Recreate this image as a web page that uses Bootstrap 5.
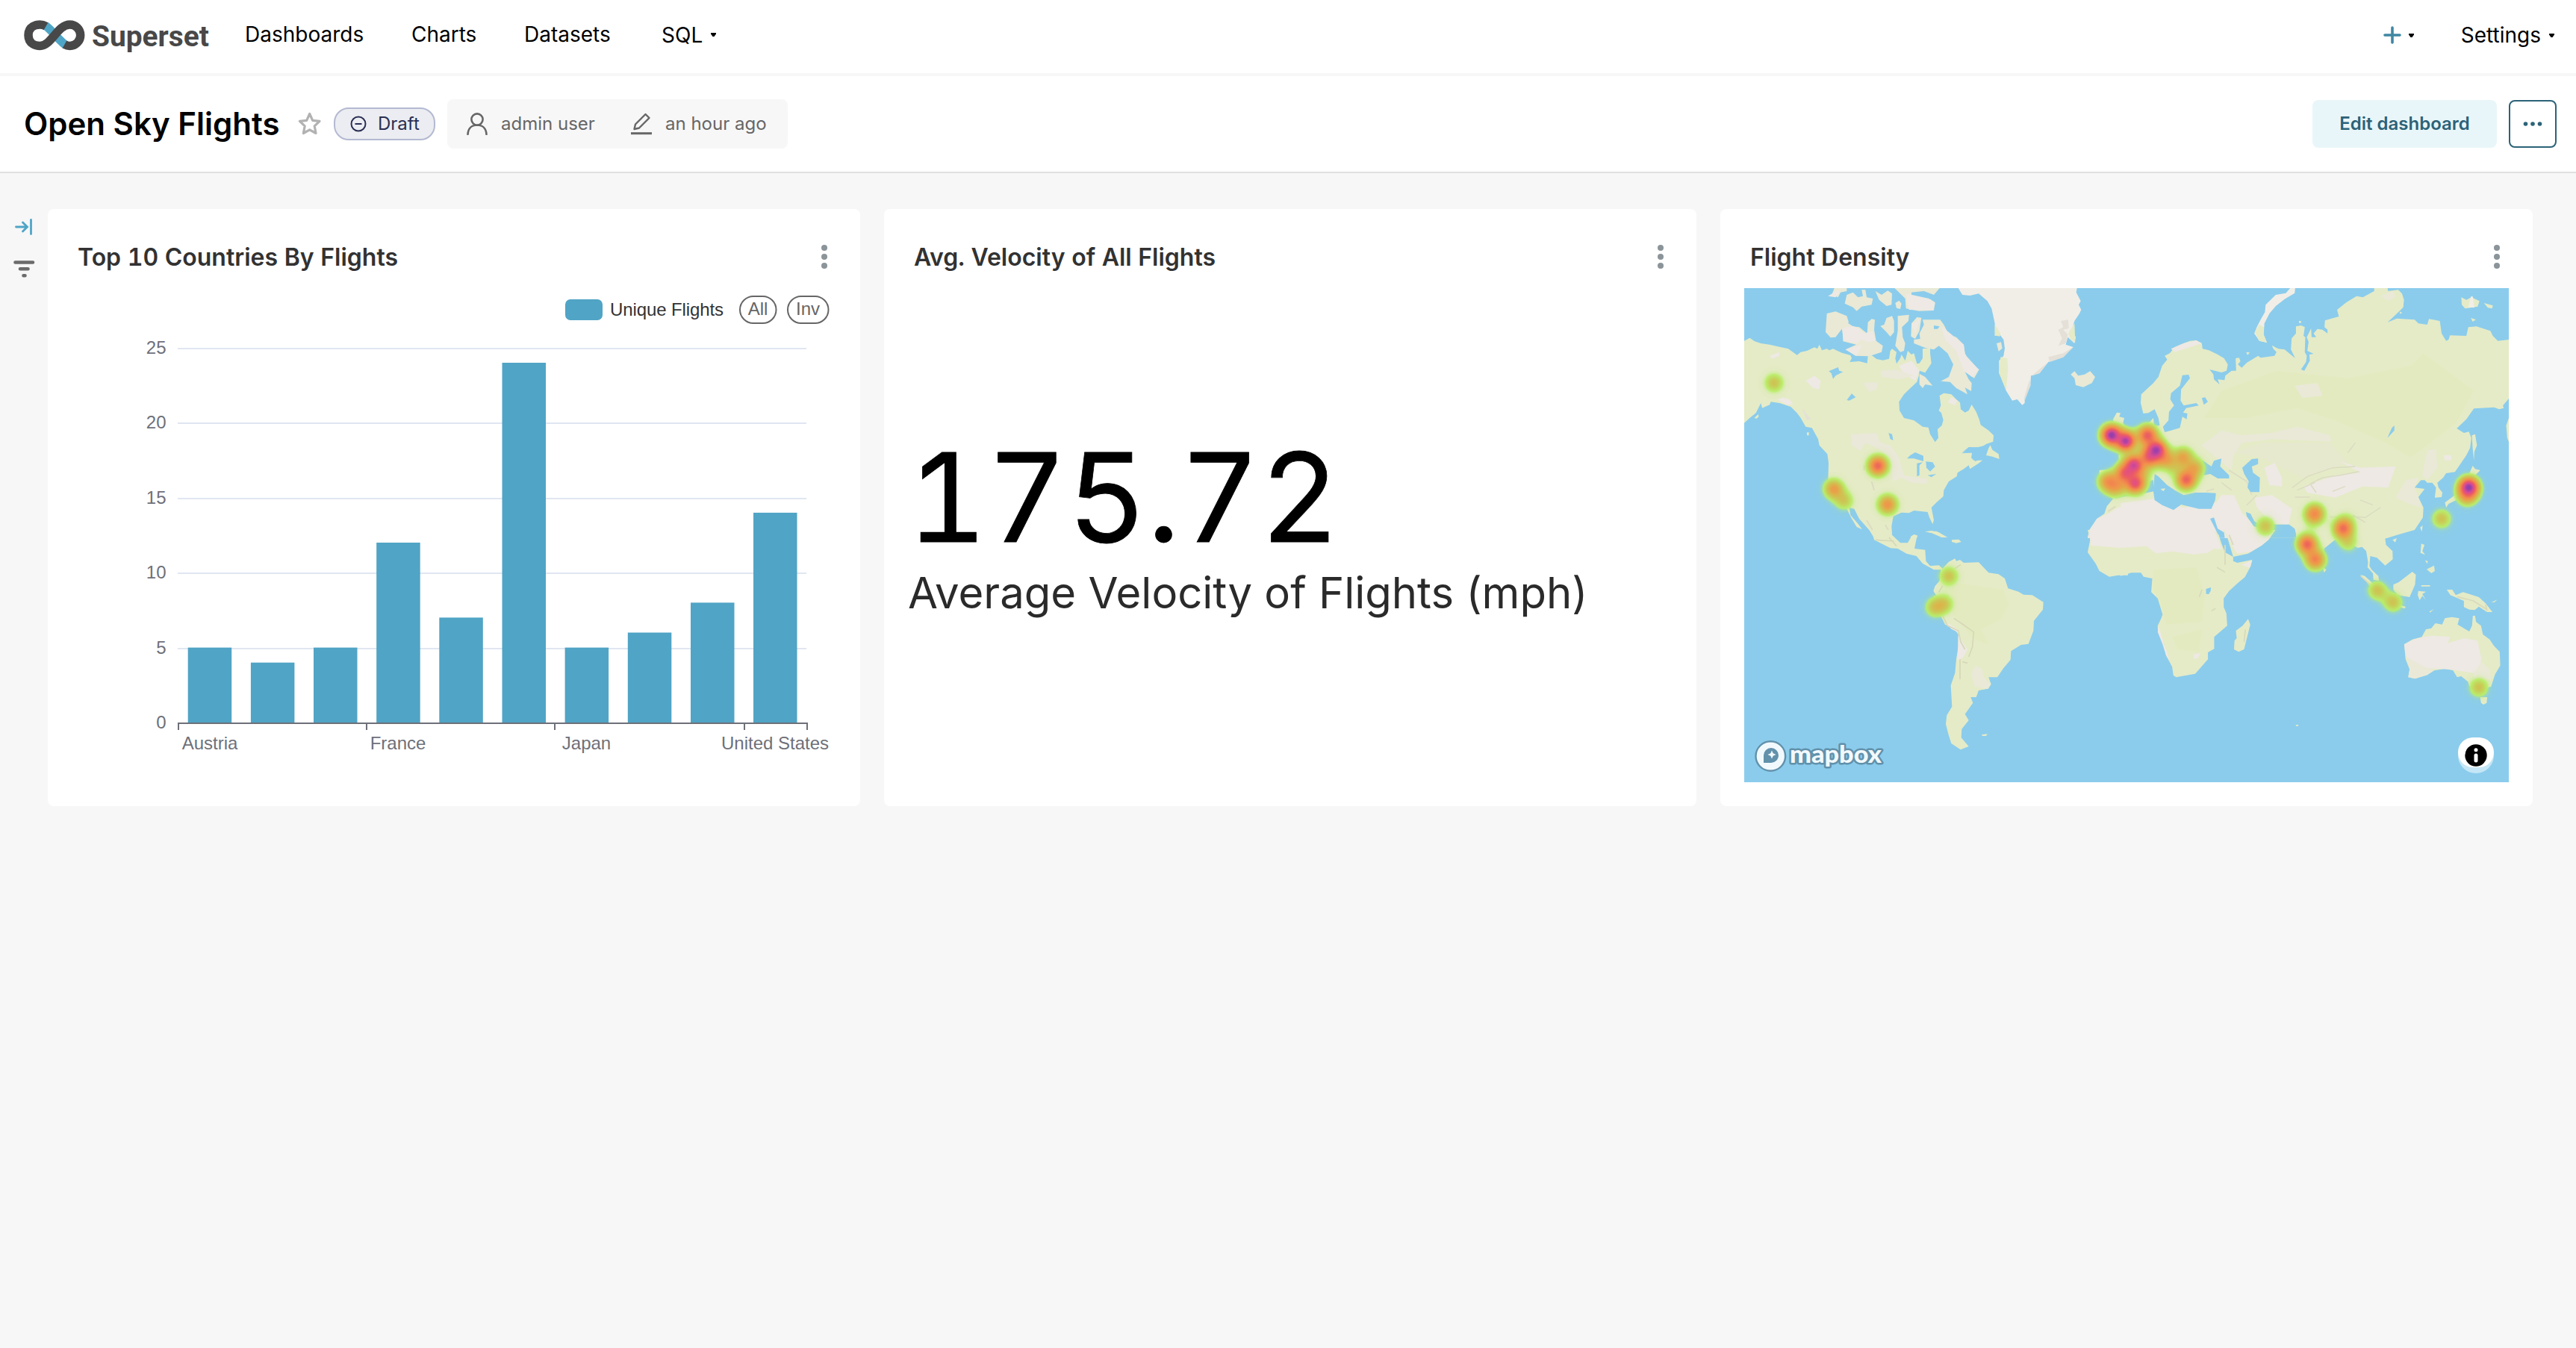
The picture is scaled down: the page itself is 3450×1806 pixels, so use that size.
<!DOCTYPE html>
<html lang="en">
<head>
<meta charset="utf-8">
<title>Open Sky Flights</title>
<link href="https://cdn.jsdelivr.net/npm/bootstrap@5.3.0/dist/css/bootstrap.min.css" rel="stylesheet">
<style>
body{font-family:Inter,"Liberation Sans",sans-serif;background:#f7f7f7;color:#000;font-size:28px;line-height:1;min-height:1806px}
svg{display:block;flex:none}
.topbar{height:102px;border-bottom:4px solid #f7f7f7;padding:0 28px 0 32px;flex-wrap:nowrap}
.topbar .nav-link{color:#000;padding:0 0 6px;line-height:36px}
.logo{margin-top:-5px}
.dash-head{height:130px;border-bottom:2px solid #e0e0e0;padding:0 26px 0 32px}
.dash-title{font-size:42px;font-weight:600;line-height:50px;margin:0;width:342px;white-space:nowrap}
.draft{height:44px;width:136px;border:2px solid #b4b9d2;border-radius:20px;background:#ecedf2;color:#2a2f52;font-size:24px;padding-left:20px;margin-left:14px}
.meta{height:66px;width:456px;background:#f7f7f7;border-radius:8px;color:#666;font-size:24px;margin-left:16px;padding-left:26px}
.btn-edit{width:247px;height:64px;border:0;border-radius:8px;background:#e9f6f9;color:#2c6278;font-weight:600;font-size:24px;padding:0}
.btn-more{width:64px;height:64px;border:2px solid #2b6378;border-radius:8px;background:#fff;padding:0}
.rail{width:64px;padding:10px 0 0 16px}
.board{padding:48px 58px 0 0}
.panel{border:0;border-radius:8px;height:800px;flex:1 1 0;padding:0 32px}
.panel-head{height:106px;padding:24px 10px 0 8px}
.panel-title{font-size:32px;font-weight:600;color:#323232;line-height:40px;margin:0;padding-top:21px;font-feature-settings:"tnum"}
.big-num{font-size:165px;line-height:180px;font-feature-settings:"tnum";margin:190px 0 0 -1px;white-space:nowrap;-webkit-text-stroke:.8px #000}
.big-sub{font-size:58px;line-height:70px;color:#2a2a2a;margin:3px 0 0;white-space:nowrap}
</style>
</head>
<body>
<nav class="navbar topbar bg-white d-flex justify-content-between">
  <div class="d-flex align-items-center">
    <svg class="logo" width="250" height="54" viewBox="32 20 250 54">
      <g fill="none" stroke-width="11.5" stroke="#484848">
        <path d="M61 34.500C69 40 78 53 88 60.500" stroke="#4fa5c6"/>
        <path d="M61.500 35.200C59 33.700 56.500 33 53.500 33C49 33 38 35 38 47.200S49 61.400 53.500 61.400C69 61.400 77 33 93.500 33a14.200 14.200 0 0 1 0 28.400C91.500 61.400 89 60.900 86.500 59.500"/>
      </g>
      <text x="123" y="62" font-family="Roboto" font-weight="700" font-size="39" textLength="157" lengthAdjust="spacingAndGlyphs" fill="#484848">Superset</text>
    </svg>
    <div class="d-flex" style="margin-left:46px">
      <a class="nav-link" style="width:223px">Dashboards</a>
      <a class="nav-link" style="width:151px">Charts</a>
      <a class="nav-link" style="width:184px">Datasets</a>
      <a class="nav-link d-flex align-items-center pb-1">SQL<svg style="margin-left:11px" width="8" height="6"><path d="M0 0H7V1.500L4.500 5H2.500L0 1.500Z"/></svg></a>
    </div>
  </div>
  <div class="d-flex align-items-center pb-1">
    <svg width="24" height="24"><path d="M12 2V22M2 12H22" stroke="#3f87a3" stroke-width="3.600" stroke-linecap="round"/></svg>
    <svg style="margin:2px 62px 0 10px" width="8" height="6"><path d="M0 0H7V1.500L4.500 5H2.500L0 1.500Z"/></svg>
    <span>Settings</span>
    <svg style="margin:2px 0 0 11px" width="8" height="6"><path d="M0 0H7V1.500L4.500 5H2.500L0 1.500Z"/></svg>
  </div>
</nav>
<header class="dash-head bg-white d-flex align-items-center justify-content-between">
  <div class="d-flex align-items-center">
    <h1 class="dash-title">Open Sky Flights</h1>
    <svg style="margin-left:23px" width="36" height="36" viewBox="0 0 36 36"><path d="M17.700 4.500L21.700 13.300L31 14.300L24.200 20.800L26 30.500L17.700 25.800L9.400 30.500L11.200 20.800L4.400 14.300L13.700 13.300Z" fill="none" stroke="#b2b2b2" stroke-width="3.200" stroke-linejoin="round"/></svg>
    <div class="draft d-flex align-items-center">
      <svg width="22" height="22"><circle cx="11" cy="11" r="9.500" fill="none" stroke="#2a2f52" stroke-width="2"/><path d="M6.500 11H15.500" stroke="#2a2f52" stroke-width="2"/></svg>
      <span style="margin-left:15px">Draft</span>
    </div>
    <div class="meta d-flex align-items-center">
      <svg width="28" height="30" viewBox="0 0 28 30"><path d="M1.500 29C2 21 7 16.500 14 16.500S26 21 26.500 29" fill="none" stroke="#666" stroke-width="2.600" stroke-linecap="round"/><circle cx="14" cy="9" r="7.600" fill="#f7f7f7" stroke="#666" stroke-width="2.600"/></svg>
      <span style="margin-left:18px;width:174px">admin user</span>
      <svg width="28" height="30" viewBox="0 0 28 30"><path d="M0 27.700H28" stroke="#666" stroke-width="3"/><path d="M4.500 22L6 15.500L19.500 2L24.500 7L11 20.500Z" fill="none" stroke="#666" stroke-width="2.400" stroke-linejoin="round"/></svg>
      <span style="margin-left:18px">an hour ago</span>
    </div>
  </div>
  <div class="d-flex gap-3">
    <button class="btn btn-edit">Edit dashboard</button>
    <button class="btn btn-more d-flex align-items-center justify-content-center"><svg width="26" height="8" fill="#2b6378"><circle cx="3.500" cy="4" r="2.800"/><circle cx="13" cy="4" r="2.800"/><circle cx="22.500" cy="4" r="2.800"/></svg></button>
  </div>
</header>
<main class="board d-flex">
  <aside class="rail">
    <svg width="32" height="84" viewBox="16 290 32 84"><path d="M21.500 304H36M30.500 298L36.500 304L30.500 310M41.500 294.500V313.500" fill="none" stroke="#4fa5c6" stroke-width="2.800" stroke-linecap="round"/><path d="M20.500 351.500H44M27 360.300H37.500M31.500 369.300H33.500" stroke="#6b6b6b" stroke-width="4.600" stroke-linecap="round"/></svg>
  </aside>
  <div class="d-flex flex-fill" style="gap:32px">
    <section class="card panel">
      <div class="panel-head d-flex justify-content-between align-items-start">
        <h2 class="panel-title">Top 10 Countries By Flights</h2>
        <svg class="mt-4" width="12" height="34" viewBox="0 0 12 34" fill="#8a9499"><circle cx="6" cy="4" r="4"/><circle cx="6" cy="16" r="4"/><circle cx="6" cy="28" r="4"/></svg>
      </div>
      <svg id="chart" width="1024" height="662" viewBox="96 386 1024 662" font-family="'Liberation Sans',Arial,sans-serif" font-size="24">
        <rect x="757" y="401" width="50" height="28" rx="7" fill="#50a4c5"/>
        <text x="817" y="423" fill="#333" textLength="152">Unique Flights</text>
        <g fill="none" stroke="#666" stroke-width="2"><rect x="991" y="397" width="48.500" height="36" rx="18"/><rect x="1055" y="397" width="54.500" height="36" rx="18"/></g>
        <g fill="#666" text-anchor="middle"><text x="1015" y="422">All</text><text x="1082" y="422">Inv</text></g>
        <path d="M238 467H1080M238 567H1080M238 668H1080M238 768H1080M238 869H1080" stroke="#e0e6f1" stroke-width="2"/>
        <g fill="#50a4c5">
          <rect x="251.700" y="867.600" width="58.500" height="101"/><rect x="335.900" y="887.700" width="58.500" height="81"/><rect x="420" y="867.600" width="58.500" height="101"/><rect x="504.200" y="727" width="58.500" height="242"/><rect x="588.300" y="827.400" width="58.500" height="141"/><rect x="672.500" y="486" width="58.500" height="483"/><rect x="756.600" y="867.600" width="58.500" height="101"/><rect x="840.800" y="847.500" width="58.500" height="121"/><rect x="925" y="807.400" width="58.500" height="161"/><rect x="1009" y="686.900" width="58.500" height="282"/>
        </g>
        <path d="M238 969H1082M239 969V978M491 969V978M743 969V978M997 969V978M1081 969V978" stroke="#6e7079" stroke-width="2"/>
        <g fill="#6e7079" text-anchor="end"><text x="222.500" y="474">25</text><text x="222.500" y="574">20</text><text x="222.500" y="675">15</text><text x="222.500" y="775">10</text><text x="222.500" y="876">5</text><text x="222.500" y="976">0</text></g>
        <g fill="#6e7079" text-anchor="middle"><text x="281" y="1004">Austria</text><text x="533" y="1004">France</text><text x="785.500" y="1004">Japan</text><text x="1038" y="1004">United States</text></g>
      </svg>
    </section>
    <section class="card panel">
      <div class="panel-head d-flex justify-content-between align-items-start">
        <h2 class="panel-title">Avg. Velocity of All Flights</h2>
        <svg class="mt-4" width="12" height="34" viewBox="0 0 12 34" fill="#8a9499"><circle cx="6" cy="4" r="4"/><circle cx="6" cy="16" r="4"/><circle cx="6" cy="28" r="4"/></svg>
      </div>
      <div class="big-num">175.72</div>
      <div class="big-sub">Average Velocity of Flights (mph)</div>
    </section>
    <section class="card panel">
      <div class="panel-head d-flex justify-content-between align-items-start">
        <h2 class="panel-title">Flight Density</h2>
        <svg class="mt-4" width="12" height="34" viewBox="0 0 12 34" fill="#8a9499"><circle cx="6" cy="4" r="4"/><circle cx="6" cy="16" r="4"/><circle cx="6" cy="28" r="4"/></svg>
      </div>
      <svg id="worldmap" width="1024" height="662" viewBox="0 0 1024 662">
        <defs>
          <radialGradient id="spot"><stop offset="0" stop-opacity="1"/><stop offset=".1" stop-opacity=".956"/><stop offset=".2" stop-opacity=".835"/><stop offset=".3" stop-opacity=".667"/><stop offset=".4" stop-opacity=".487"/><stop offset=".5" stop-opacity=".325"/><stop offset=".6" stop-opacity=".198"/><stop offset=".7" stop-opacity=".11"/><stop offset=".8" stop-opacity=".056"/><stop offset=".9" stop-opacity=".02"/><stop offset="1" stop-opacity="0"/></radialGradient>
          <circle id="s" r="28.500" fill="url(#spot)"/>
          <filter id="heat" filterUnits="userSpaceOnUse" x="0" y="0" width="1024" height="662" color-interpolation-filters="sRGB">
            <feColorMatrix values="0 0 0 1 0  0 0 0 1 0  0 0 0 1 0  0 0 0 1 0"/>
            <feComponentTransfer>
              <feFuncR type="table" tableValues=".72 .72 .72 .73 .75 .78 .81 .85 .885 .92 .94 .95 .94 .93 .92 .89 .85 .76 .66 .56 .48"/>
              <feFuncG type="table" tableValues=".93 .93 .93 .93 .88 .82 .765 .725 .67 .62 .58 .525 .47 .41 .35 .32 .305 .28 .26 .245 .23"/>
              <feFuncB type="table" tableValues=".42 .42 .42 .415 .39 .35 .33 .305 .29 .29 .30 .31 .33 .35 .415 .50 .565 .61 .65 .675 .70"/>
              <feFuncA type="table" tableValues="0 .05 .3 .96 1 1 1 1 1 1 1 1 1 1 1 1 1 1 1 1 1"/>
            </feComponentTransfer>
          </filter>
          <clipPath id="frame"><rect width="1024" height="662"/></clipPath>
        </defs>
        <rect width="1024" height="662" fill="#8bccec"/>
        <g clip-path="url(#frame)">
        <!-- North Atlantic, Canada, Greenland -->
        <g transform="translate(-6 -6) scale(.33333)" fill="#e5ebc7">
          <path d="M18 230L40 218 60 232 85 240 120 245 160 254 195 262 230 287 245 275 270 270 300 256 312 262 320 245 330 268 350 262 360 268 375 262 410 278 445 288 450 300 442 315 480 312 512 320 515 292 530 288 550 303 575 308 600 302 605 270 612 262 630 275 625 300 630 322 645 300 650 285 665 310 675 270 690 285 700 280 712 322 722 320 735 300 735 262 765 258 765 280 770 320 745 358 722 350 720 370 712 395 680 425 660 445 640 475 642 510 660 540 700 550 735 575 758 578 765 605 785 637 798 620 795 585 812 570 818 548 810 520 800 510 808 490 803 450 820 440 850 445 870 465 885 478 888 505 905 518 920 510 932 486 950 515 962 545 968 568 1000 590 1020 610 1018 635 990 645 970 658 920 657 895 678 935 672 930 700 940 710 975 710 960 722 925 745 920 730 900 745 875 760 872 775 840 795 820 830 818 855 790 880 770 900 780 950 775 967 762 940 755 918 700 912 680 922 650 920 617 935 610 975 612 1022 540 1022 520 990 480 945 460 905 440 900 445 930 475 965 492 988 470 978 450 945 430 905 400 880 380 850 355 790 357 720 352 685 320 650 315 625 290 580 265 575 245 540 230 520 205 495 160 480 125 475 120 487 90 500 85 480 65 520 40 540 18 560Z"/>
          <path d="M990 690L1005 645 1015 668 1040 685 1043 705 1015 695ZM58 540L75 525 76 535 68 542ZM270 598H278V610H270Z"/>
          <g fill="#e9e9d5">
            <path d="M350 120L385 112 430 130 438 155 412 180 385 215 365 217 345 195ZM412 175L435 158 455 172 480 175 512 200 515 155 530 142 543 145 540 185 548 230 575 250 570 275 520 292 465 290 425 265 468 245 415 232ZM565 170L580 165 590 138 612 130 620 150 620 195 605 213 590 195ZM635 130L680 125 678 150 652 175 655 215 665 240 660 270 645 275 625 250 635 190ZM690 160L712 135 730 137 722 190 705 222 688 212ZM735 145H805L820 165 840 205 870 215 900 245 905 280 930 325 962 345 942 380 905 355 920 385 932 400 930 432 905 418 915 445 870 420 845 395 808 392 840 375 858 325 835 280 800 250 780 265 745 258 700 240 700 225 725 222 722 200 740 165ZM722 362L745 375 775 410 745 405 735 420 722 405Z"/>
            <path d="M370 45L380 18H430L430 30 405 35 395 55ZM422 80L430 45 455 35 475 55 495 50 490 25 505 25 510 55 535 60 530 85 490 92 470 110 455 95ZM545 30L570 45 595 28 612 40 610 85 590 90 560 65ZM625 78L640 68 650 80 645 102 630 98ZM622 18H803L780 45 740 30 690 35 690 65 720 75 765 62 785 75 780 108 720 110 668 100 665 60ZM1330 365L1345 352 1360 370 1385 365 1408 352 1428 375 1415 400 1380 416 1350 408 1345 380ZM1032 240L1050 235 1055 260 1040 272Z"/>
          </g>
          <path fill="#f1eee7" d="M878 18L895 45 925 48 960 40 995 70 1012 100 1025 160 1025 210 1045 205 1060 225 1065 260 1060 290 1042 310 1042 360 1058 390 1070 430 1095 470 1115 465 1135 488 1145 480 1145 455 1168 410 1170 370 1205 360 1240 315 1300 295 1340 255 1310 245 1318 215 1345 240 1350 215 1335 185 1345 150 1365 120 1372 105 1362 85 1370 70 1352 35 1355 18Z"/>
          <path d="M1025 165L1048 200 1045 212 1025 208ZM1048 295L1075 300 1078 345 1070 430 1042 360ZM1320 200L1345 160 1348 235 1330 225Z"/>
          <path fill="#e4e0d8" d="M1290 150L1320 145 1322 180 1300 185 1318 205 1310 240 1280 250 1295 220 1280 185 1300 175ZM1240 295L1300 280 1340 255 1300 296 1245 315ZM1168 375L1235 318 1205 360 1170 372ZM1145 450L1165 385 1168 410 1145 470ZM250 500L285 545 270 548Z"/>
          <path fill="#eee9e4" d="M410 180L455 170 475 180 500 200 535 190 545 230 515 235 490 225 470 240 420 230ZM425 265L490 245 470 290ZM640 330L690 310 722 350 705 390 660 365ZM690 165L725 140 705 200ZM810 170L900 245 905 285 960 345 935 375 900 350 870 270 825 225ZM668 40L760 60 785 80 775 108 680 105ZM355 50L395 25 400 35 385 55ZM120 290L160 275 160 290 130 302ZM150 465L175 458 200 465 215 485 190 488ZM265 390L300 370 325 390 320 425 295 420ZM850 455L875 470 865 488 835 478Z"/>
          <path fill="#eae8d8" d="M445 605L550 600 565 640 605 650 640 700 660 770 755 785 755 805 690 800 650 780 615 795 605 700 560 665 505 640 485 672 450 650ZM565 350L630 345 700 370 640 385 570 375ZM495 400L555 395 550 425 520 435Z"/>
          <path fill="#8bccec" d="M672 703L685 690 705 678 738 692 738 714 700 703ZM712 722L735 718 722 730 722 770 712 775ZM748 715L775 718 785 735 765 755 750 740ZM755 770L790 765 770 778ZM358 352L395 336 400 350 415 355 385 370 375 383 368 360ZM430 468L450 442 466 457 440 470ZM598 600L612 605 617 630 605 625ZM780 168L803 172 795 182 780 182ZM1010 645L955 658 890 682 932 680 945 715 980 700 1000 660Z"/>
          <path d="M1500 545L1515 518 1530 520 1525 535 1545 540 1540 560 1560 590 1560 650 1510 650ZM1522 690L1540 683 1560 668V850L1500 865 1445 820 1445 750 1530 745ZM1560 855L1500 865 1475 895 1465 925 1435 945 1405 990 1398 1022H1560ZM745 997L770 993 800 1000 833 1020 800 1015 770 1002ZM685 1018L700 1008 713 1012V1020Z"/>
          <path fill="#eee9e4" d="M1560 892L1520 900 1480 925 1435 945 1405 990 1398 1022H1560Z"/>
          <path d="M1480 915L1510 895M530 795L540 830M500 730V750M510 950L545 1010M585 970L597 990" stroke="#dcdcc0" stroke-width="6"/>
        </g>
        <!-- Europe and Asia -->
        <g transform="translate(504 -6) scale(.33804 .33333)" fill="#e5ebc7">
          <path d="M90 522L80 480 82 445 130 400 150 375 165 330 185 305 175 290 195 280 215 255 250 240 275 230 300 228 322 240 325 262 350 268 385 285 410 300 425 325 420 350 400 357 353 345 368 365 370 385 392 405 385 385 412 388 415 370 440 350 458 350 456 300 470 298 475 312 465 325 480 338 500 318 545 290 555 298 610 290 618 275 605 262 600 248 625 262 650 265 692 300 675 265 678 220 695 200 695 172 715 168 730 175 725 210 732 215 730 275 738 290 735 315 715 345 728 350 750 310 748 285 765 282 740 270 745 235 738 215 755 180 757 215 775 215 765 200 780 182 800 185 820 200 820 185 808 175 810 148 865 132 858 105 895 75 935 50 960 55 1005 30 1005 18H1058L1060 30 1100 25 1115 40 1123 65 1120 95 1085 130 1058 155 1095 140 1115 142 1165 145 1180 160 1215 165 1222 142 1265 150 1272 200 1290 230 1300 225 1305 208 1370 210 1378 175 1410 172 1465 190 1475 210 1495 230 1540 225V460L1515 490 1518 500 1500 505 1480 497 1400 502 1370 545 1332 582 1360 600 1380 595 1390 620 1385 660 1370 690 1325 757 1290 762 1278 780 1255 800 1260 820 1275 840 1272 858 1245 860 1250 820 1235 800 1215 800 1205 790 1190 790 1165 820 1205 825 1180 858 1200 900 1198 940 1165 990 1095 1010 1058 1022H0V670L60 610 100 590 112 560 130 540 133 572 155 570 150 540 135 505 110 520Z"/>
          <path fill="#e4eac0" d="M400 430L620 350 900 380 1150 330 1200 280 1400 430 1330 560 1150 700 1050 640 850 550 700 500 500 540 330 540Z"/>
          <path fill="#eae9d8" d="M320 650L400 590 480 610 600 600 700 575 830 610 835 635 600 625 480 640 445 700 440 750 380 700ZM1030 50L1080 30 1090 55 1060 68ZM1215 670L1250 665 1255 740 1215 790 1195 770ZM690 410L780 400 800 450 720 460ZM1130 790L1180 780 1165 820 1180 858 1190 900 1130 880 1090 860Z"/>
          <path fill="#e7e9ce" d="M440 680L560 640 830 640 900 720 720 780 560 700Z"/>
          <path fill="#eee9e4" d="M0 882L130 865 250 900 380 880 400 850 450 850 480 920 540 980 600 1022H0ZM530 860L600 850 680 905 665 968 600 962 540 900ZM870 715L950 740 1090 735 1060 820 960 815 850 860 740 840 725 815 850 770 950 760ZM570 740L610 720 640 780 640 815 590 810ZM200 262L250 240 300 228 322 240 260 260 215 275ZM1280 690L1310 690 1310 710 1285 710Z"/>
          <path d="M680 820L740 775 840 740 930 735M750 805L800 780 870 770 945 755M755 810L775 840M690 858H750M770 800L700 830M430 750L500 795 520 850M500 890L540 850M340 835L370 825M830 938L900 935 970 940 1030 900M400 800L440 830M900 680L930 640M950 870L1000 890M920 930L970 960M840 835L890 815" fill="none" stroke="#dbdbc2" stroke-width="4.500"/>
          <path fill="#8bccec" d="M245 368L270 366 275 380 240 425 238 470 250 490 300 480 310 490 260 500 248 518 265 522 262 545 245 535 235 580 200 590 175 597 168 575 190 550 192 515 212 490 197 465 200 440 235 410ZM322 460L335 457 346 475 330 487ZM130 835L135 765 150 775 185 810 215 830 250 850 295 840 340 840 378 842 375 870 360 905 310 905 240 888 210 910 165 890 135 870ZM0 815L130 790 132 835 60 850 0 857ZM325 710L360 735 370 712 400 703 395 735 430 770 430 783 385 783 355 765 330 770ZM482 740L520 705 545 703 545 725 520 735 525 760 552 780 550 838 515 838 503 820 508 795 490 765ZM1057 620L1075 580 1085 570V590L1065 612ZM355 945L370 940 385 985 410 1000 413 1022H392L375 985ZM497 918L515 925 530 955 545 965 610 968 668 968 690 985 700 1022H572L600 1000 570 990 528 975 500 935Z"/>
          <path fill="#f1eee7" d="M672 18H692L690 38 650 62 615 90 590 120 570 160 567 205 580 237 550 230 530 200 540 175 555 145 572 115 575 85 615 45 655 38Z"/>
          <path d="M532 195L550 165 567 175 567 205 580 237 550 230ZM1392 610L1405 605 1412 650 1402 675 1400 710 1395 660ZM1380 768L1395 732 1405 745 1425 750 1405 770ZM1285 880L1325 850 1330 870 1300 885 1290 900ZM1330 850L1370 820 1380 780 1400 800 1395 850 1340 875ZM1540 535L1528 570 1532 620 1540 640ZM1350 55L1370 65 1390 55 1422 70 1415 92 1365 100 1352 85ZM1440 78L1475 88 1472 100 1455 97ZM1388 138L1408 145 1395 153ZM158 825L178 823 170 835ZM498 275L512 277 503 287ZM1187 980L1197 972 1194 997ZM1106 112L1116 117 1108 122ZM707 150H715V158H707Z"/>
          <path fill="#f1eee7" d="M1388 52H1396L1402 96H1378Z"/>
        </g>
        <!-- Central and South America -->
        <g transform="translate(-6 324) scale(.33333)" fill="#e5ebc7">
          <path d="M530 0H610L612 20 645 52 675 52 690 25 713 22 702 75 745 80 748 125 765 145 800 142 815 155 840 128 865 115 870 125 885 120 900 132 960 130 1000 172 1040 178 1065 195 1078 235 1120 248 1140 260 1175 262 1220 290 1218 320 1182 365 1180 405 1160 458 1130 462 1090 487 1088 522 1060 555 1035 592 1000 592 1010 620 998 638 960 645 950 672 928 672 937 695 905 740 920 765 892 800 890 835 920 870 887 883 850 858 838 820 828 780 832 745 853 710 848 625 865 575 870 520 878 470 878 420 860 395 825 380 805 340 780 300 780 265 790 265 778 245 785 225 803 205 808 160 780 160 735 135 710 105 670 95 635 75 605 73 540 40ZM745 7L790 5 835 30 810 30 785 15ZM852 40L880 38 890 48 870 53 852 48ZM972 823L995 820 990 828 975 828ZM1398 0L1408 40 1398 90 1430 135 1445 165 1485 188 1520 182 1560 182V0Z"/>
          <path fill="#e4eac0" d="M850 210L1060 240 1080 300 1050 360 970 400 1000 460 940 440 850 330Z"/>
          <path fill="#eee9e4" d="M878 425L895 450 915 480 900 510 875 525ZM1405 0H1560V75L1410 62ZM825 370L870 395 878 412 850 398Z"/>
          <path fill="#eae9d8" d="M930 580L945 545 975 560 980 590 1008 620 998 638 945 630Z"/>
          <path d="M815 345L835 385 878 405 888 450 905 480M860 355L890 375 940 410 935 470 920 510M885 520V600M895 530L915 535M800 250L815 225M865 155L888 140M545 40L620 45M600 30L630 65" fill="none" stroke="#d6d8b8" stroke-width="5"/>
        </g>
        <!-- Africa, South Asia, Oceania -->
        <g transform="translate(504 324) scale(.36352 .33333)" fill="#e5ebc7">
          <path d="M0 0H345L362 20 372 55 385 90 415 108 415 125 430 132 485 120 480 145 458 190 430 215 400 245 380 275 380 310 390 335 393 385 345 430 345 478 322 492 322 520 275 578 205 592 195 585 190 550 168 505 160 460 137 400 137 385 150 355 155 340 137 275 113 250 117 195 85 188 75 172 40 172 0 185ZM378 0L395 35 415 108 470 95 520 62 545 40 570 0ZM645 0L650 60 690 150 720 165 745 120 750 75 790 40 850 60 875 72 890 68 905 85 912 130 910 150 930 175 932 200 952 205 950 185 925 160 917 145 920 105 945 112 975 143 1003 118 1002 85 978 60 975 35 1005 17 1020 10 1070 0ZM745 150L758 160 750 172ZM883 180L900 185 930 215 975 270 960 285 930 240ZM960 280L1050 308 1048 316 965 292ZM1005 220L1025 210 1075 168 1088 180 1085 220 1065 270 1020 262 1005 240ZM1097 245L1125 248 1112 258 1125 282 1112 265 1102 283 1095 262ZM1108 55L1120 60 1112 85 1122 100 1105 92ZM1128 158L1155 143 1158 165 1145 174ZM1122 122L1132 125 1130 136ZM1108 222H1140V227H1108ZM1138 328L1155 318 1140 332ZM1202 240L1222 240 1235 262 1262 250 1320 270 1345 295 1370 330 1350 330 1320 308 1305 322 1285 320 1265 310 1265 285 1215 262ZM1365 292L1388 280 1378 290ZM1002 40L1018 33 1012 50ZM646 783H655V788H646Z"/>
          <path d="M1045 460L1075 440 1110 430 1125 400 1145 395 1160 375 1185 380 1195 355 1220 350 1248 355 1242 380 1285 408 1295 385 1298 345 1306 345 1310 370 1328 385 1335 420 1360 440 1375 465 1397 490 1399 545 1380 580 1365 630 1330 640 1285 628 1280 610 1255 588 1240 592 1225 565 1195 558 1155 565 1130 583 1085 598 1060 592 1065 560 1050 520ZM1325 672H1351L1349 695 1337 702 1328 695ZM470 358L478 380 455 480 435 490 418 480 420 445 428 435 425 405 450 385Z"/>
          <path fill="#e4eac0" d="M120 160L280 150 310 260 300 370 165 380 150 300 120 240ZM190 430L300 400 290 490 210 480Z"/>
          <path fill="#eee9e4" d="M0 0H345L368 60 372 78 345 75 320 92 270 98 190 86 130 94 95 65 0 72ZM382 0L420 80 430 95 480 88 520 62 545 40 570 0ZM140 385L160 460 175 500 180 525 168 505 155 460 137 410ZM270 500L295 495 285 515 270 518ZM445 140L485 122 475 152ZM1045 460L1080 440 1120 430 1150 425 1215 430 1205 455 1265 435 1315 445 1330 520 1320 560 1300 575 1210 560 1110 555 1080 530 1052 510Z"/>
          <path fill="#eae9d8" d="M1052 510L1130 555 1155 565 1130 583 1085 598 1060 592 1065 560ZM1300 575L1330 530 1360 560 1365 600 1300 605Z"/>
          <path fill="#8bccec" d="M315 237L333 231 332 245 325 258 315 257Z"/>
          <path d="M385 60V140M1240 268L1300 285 1350 320M460 400L455 450M290 270L300 240M335 325L350 315M400 20L415 60M355 150L385 170M885 185L920 220M1345 300L1350 325" fill="none" stroke="#d8dabb" stroke-width="5"/>
        </g>
        </g>
        <!-- density layer -->
        <g filter="url(#heat)">
          <use href="#s" x="40" y="127" opacity=".3"/><use href="#s" x="179" y="238" opacity=".66"/><use href="#s" x="120" y="269" opacity=".45"/><use href="#s" x="134" y="285" opacity=".27"/><use href="#s" x="192" y="290" opacity=".49"/>
          <use href="#s" x="492" y="197" opacity=".95"/><use href="#s" x="511" y="205" opacity=".9"/><use href="#s" x="487" y="259" opacity=".45"/><use href="#s" x="498" y="267" opacity=".36"/>
          <use href="#s" x="540" y="197" opacity=".68"/><use href="#s" x="552" y="217" opacity=".9"/><use href="#s" x="543" y="226" opacity=".6"/><use href="#s" x="522" y="237" opacity=".8"/><use href="#s" x="510" y="248" opacity=".62"/><use href="#s" x="524" y="262" opacity=".73"/><use href="#s" x="537" y="248" opacity=".15"/>
          <use href="#s" x="565" y="230" opacity=".34"/><use href="#s" x="588" y="226" opacity=".4"/><use href="#s" x="604" y="241" opacity=".36"/><use href="#s" x="592" y="257" opacity=".66"/><use href="#s" x="575" y="240" opacity=".15"/>
          <use href="#s" x="970.500" y="267" opacity=".95"/><use href="#s" x="968" y="279" opacity=".35"/><use href="#s" x="934" y="309" opacity=".3"/><use href="#s" x="698" y="319" opacity=".3"/>
          <use href="#s" x="764" y="302" opacity=".5"/><use href="#s" x="762" y="310" opacity=".1"/><use href="#s" x="802" y="322" opacity=".62"/><use href="#s" x="808" y="310" opacity=".1"/><use href="#s" x="754" y="343" opacity=".66"/><use href="#s" x="765" y="364" opacity=".55"/><use href="#s" x="809" y="341" opacity=".22"/>
          <use href="#s" x="848" y="405" opacity=".3"/><use href="#s" x="869" y="421" opacity=".3"/><use href="#s" x="984" y="535" opacity=".3"/>
          <use href="#s" x="274" y="386" opacity=".3"/><use href="#s" x="255" y="428" opacity=".28"/><use href="#s" x="268" y="423" opacity=".26"/>
        </g>
        <!-- attribution -->
        <circle cx="35.300" cy="627" r="19.800" fill="#f2f9fd" stroke="#6191ab" stroke-width="2.400"/>
        <path d="M26 636V626A10 10 0 1 1 36 636Z" fill="#6191ab"/>
        <path d="M37 619.500L38.700 623.300 42.500 625 38.700 626.700 37 630.500 35.300 626.700 31.500 625 35.300 623.300Z" fill="#f2f9fd"/>
        <text x="61" y="635.500" font-family="Lato" font-weight="900" font-size="33" textLength="123" lengthAdjust="spacingAndGlyphs" fill="#f2f9fd" stroke="#6191ab" stroke-width="5" stroke-linejoin="round" paint-order="stroke">mapbox</text>
        <circle cx="980" cy="626" r="24" fill="#fff" fill-opacity=".5"/>
        <rect x="956" y="602" width="48" height="40" rx="20" fill="#fff"/>
        <circle cx="980" cy="626" r="14.700"/>
        <path d="M980 626V633" stroke="#fff" stroke-width="5" stroke-linecap="round"/><circle cx="980" cy="618.700" r="2.500" fill="#fff"/>
      </svg>
    </section>
  </div>
</main>
<script src="https://cdn.jsdelivr.net/npm/bootstrap@5.3.0/dist/js/bootstrap.bundle.min.js"></script>
</body>
</html>
